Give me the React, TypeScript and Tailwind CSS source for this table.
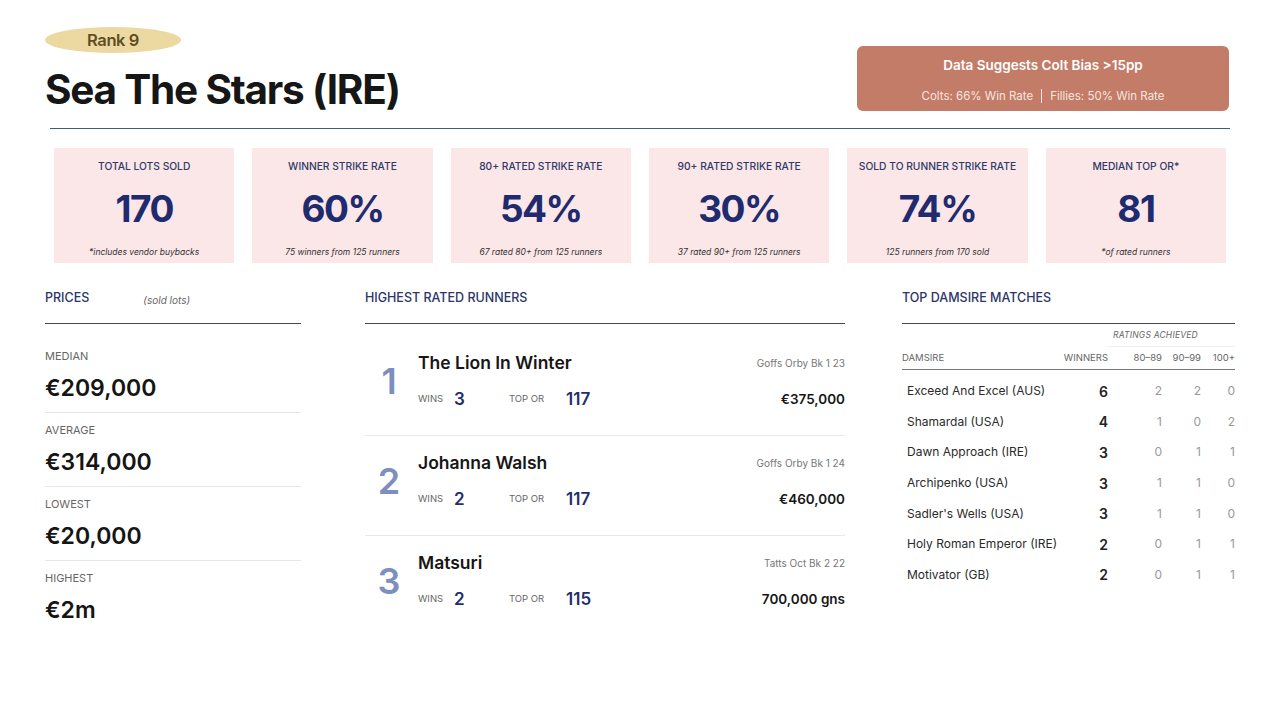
const stats = [
  { label: "Total Lots Sold", value: "170", note: "*includes vendor buybacks" },
  { label: "Winner Strike Rate", value: "60%", note: "75 winners from 125 runners" },
  { label: "80+ Rated Strike Rate", value: "54%", note: "67 rated 80+ from 125 runners" },
  { label: "90+ Rated Strike Rate", value: "30%", note: "37 rated 90+ from 125 runners" },
  { label: "Sold To Runner Strike Rate", value: "74%", note: "125 runners from 170 sold" },
  { label: "Median Top OR*", value: "81", note: "*of rated runners" },
];

const prices = [
  { label: "Median", value: "€209,000" },
  { label: "Average", value: "€314,000" },
  { label: "Lowest", value: "€20,000" },
  { label: "Highest", value: "€2m" },
];

const runners = [
  { rank: 1, name: "The Lion In Winter", wins: 3, topOr: 117, sale: "Goffs Orby Bk 1 23", price: "€375,000" },
  { rank: 2, name: "Johanna Walsh", wins: 2, topOr: 117, sale: "Goffs Orby Bk 1 24", price: "€460,000" },
  { rank: 3, name: "Matsuri", wins: 2, topOr: 115, sale: "Tatts Oct Bk 2 22", price: "700,000 gns" },
];

const damsires = [
  { name: "Exceed And Excel (AUS)", winners: 6, r80: 2, r90: 2, r100: 0 },
  { name: "Shamardal (USA)", winners: 4, r80: 1, r90: 0, r100: 2 },
  { name: "Dawn Approach (IRE)", winners: 3, r80: 0, r90: 1, r100: 1 },
  { name: "Archipenko (USA)", winners: 3, r80: 1, r90: 1, r100: 0 },
  { name: "Sadler's Wells (USA)", winners: 3, r80: 1, r90: 1, r100: 0 },
  { name: "Holy Roman Emperor (IRE)", winners: 2, r80: 0, r90: 1, r100: 1 },
  { name: "Motivator (GB)", winners: 2, r80: 0, r90: 1, r100: 1 },
];

const SectionHeader = ({ title, aside }: { title: string; aside?: string }) => (
  <div className="flex h-[33px] items-start border-b border-[#4a4a4a]">
    <span className="text-[12.5px] font-medium uppercase leading-[14px] text-[#2b3568]">{title}</span>
    {aside && <span className="ml-[54px] mt-[2px] text-[10px] italic leading-[14px] text-[#666]">{aside}</span>}
  </div>
);

export default function App() {
  return (
    <div className="relative h-[720px] w-[1280px] overflow-hidden bg-white font-['Inter',sans-serif]">
      <header className="flex justify-between pl-[45px] pr-[51px] pt-[27px]">
        <div>
          <div className="flex h-[26px] w-[136px] items-center justify-center rounded-[50%/13px] bg-[#ecd9a1] text-[16.5px] font-semibold tracking-tight text-[#5f4e23]">
            Rank 9
          </div>
          <h1 className="mt-[11px] text-[40.5px] font-bold leading-[52px] tracking-[-0.03em] text-[#161616]">
            Sea The Stars (IRE)
          </h1>
        </div>
        <div className="mt-[19px] flex h-[65px] w-[372px] flex-col items-center rounded-[6px] bg-[#c27c67] text-white">
          <div className="mt-[10px] text-[13.5px] font-semibold leading-[18px]">Data Suggests Colt Bias &gt;15pp</div>
          <div className="mt-[14px] flex items-center text-[11.5px] leading-[16px] text-[#f7e6df]">
            <span>Colts: 66% Win Rate</span>
            <span className="mx-[8px] h-[14px] w-px bg-[#f7e6df]" />
            <span>Fillies: 50% Win Rate</span>
          </div>
        </div>
      </header>

      <div className="mx-[50px] mt-[12px] h-px bg-[#3e5c7c]" />

      <div className="mt-[19px] grid grid-cols-6 gap-[18px] px-[54px]">
        {stats.map((s) => (
          <div key={s.label} className="flex h-[115px] flex-col items-center bg-[#fbe6e8]">
            <div className="mt-[11px] text-[10.25px] font-medium uppercase leading-[14px] text-[#2f3a66]">{s.label}</div>
            <div className="mt-[12px] text-[37px] font-bold leading-[48px] tracking-[-0.04em] text-[#1e2b6e]">{s.value}</div>
            <div className="mt-[13px] text-[8.5px] italic leading-[12px] text-[#333]">{s.note}</div>
          </div>
        ))}
      </div>

      <div className="mt-[28px] flex pl-[45px]">
        <section className="w-[256px]">
          <SectionHeader title="Prices" aside="(sold lots)" />
          <div className="mt-[15px]">
            {prices.map((p, i) => (
              <div
                key={p.label}
                className={`pb-[8px] pt-[10px] ${i < prices.length - 1 ? "border-b border-[#e6e6e6]" : ""}`}
              >
                <div className="text-[11px] uppercase leading-[14px] text-[#666]">{p.label}</div>
                <div className="mt-[9px] text-[23px] font-semibold leading-[32px] text-[#151515]">{p.value}</div>
              </div>
            ))}
          </div>
        </section>

        <section className="ml-[64px] w-[480px]">
          <SectionHeader title="Highest Rated Runners" />
          <div className="mt-[12px]">
            {runners.map((r, i) => (
              <div
                key={r.rank}
                className={`flex items-center pb-[24px] pt-[15px] ${i < runners.length - 1 ? "border-b border-[#e8e8e8]" : ""}`}
              >
                <div className="w-[53px] pr-[5px] text-center text-[36px] font-semibold leading-none text-[#7e8ec0]">{r.rank}</div>
                <div className="flex-1">
                  <div className="flex items-center justify-between">
                    <span className="text-[17.5px] font-semibold leading-[24px] text-[#161616]">{r.name}</span>
                    <span className="text-[10px] text-[#777]">{r.sale}</span>
                  </div>
                  <div className="mt-[12px] flex items-center">
                    <span className="w-[36px] text-[9.5px] uppercase text-[#666]">Wins</span>
                    <span className="w-[55px] text-[17px] font-semibold leading-[24px] text-[#1f2e6e]">{r.wins}</span>
                    <span className="w-[57px] text-[9.5px] uppercase text-[#666]">Top OR</span>
                    <span className="text-[17px] font-semibold leading-[24px] text-[#1f2e6e]">{r.topOr}</span>
                    <span className="ml-auto text-[13.5px] font-semibold text-[#161616]">{r.price}</span>
                  </div>
                </div>
              </div>
            ))}
          </div>
        </section>

        <section className="ml-[57px] w-[333px]">
          <SectionHeader title="Top Damsire Matches" />
          <div className="grid grid-cols-[minmax(0,1fr)_60px_54px_39px_34px] items-center">
            <div className="col-start-3 col-end-6 flex h-[23px] items-center border-b border-[#f0f0f0] pl-[5px] text-[8.5px] italic uppercase tracking-wide text-[#666]">
              Ratings Achieved
            </div>
            <div className="flex h-[23px] items-center border-b border-[#777] text-[9.5px] uppercase text-[#666]">Damsire</div>
            {["Winners", "80–89", "90–99", "100+"].map((h) => (
              <div key={h} className="flex h-[23px] items-center justify-end border-b border-[#777] text-[9.5px] uppercase text-[#666]">
                {h}
              </div>
            ))}
          </div>
          <div className="pt-[6px]">
            {damsires.map((d) => (
              <div key={d.name} className="grid h-[30.6px] grid-cols-[minmax(0,1fr)_60px_54px_39px_34px] items-center">
                <span className="whitespace-nowrap pl-[5px] text-[12px] text-[#2a2a2a]">{d.name}</span>
                <span className="text-right text-[14px] font-semibold text-[#222]">{d.winners}</span>
                <span className="text-right text-[12px] text-[#999]">{d.r80}</span>
                <span className="text-right text-[12px] text-[#999]">{d.r90}</span>
                <span className="text-right text-[12px] text-[#999]">{d.r100}</span>
              </div>
            ))}
          </div>
        </section>
      </div>
    </div>
  );
}
